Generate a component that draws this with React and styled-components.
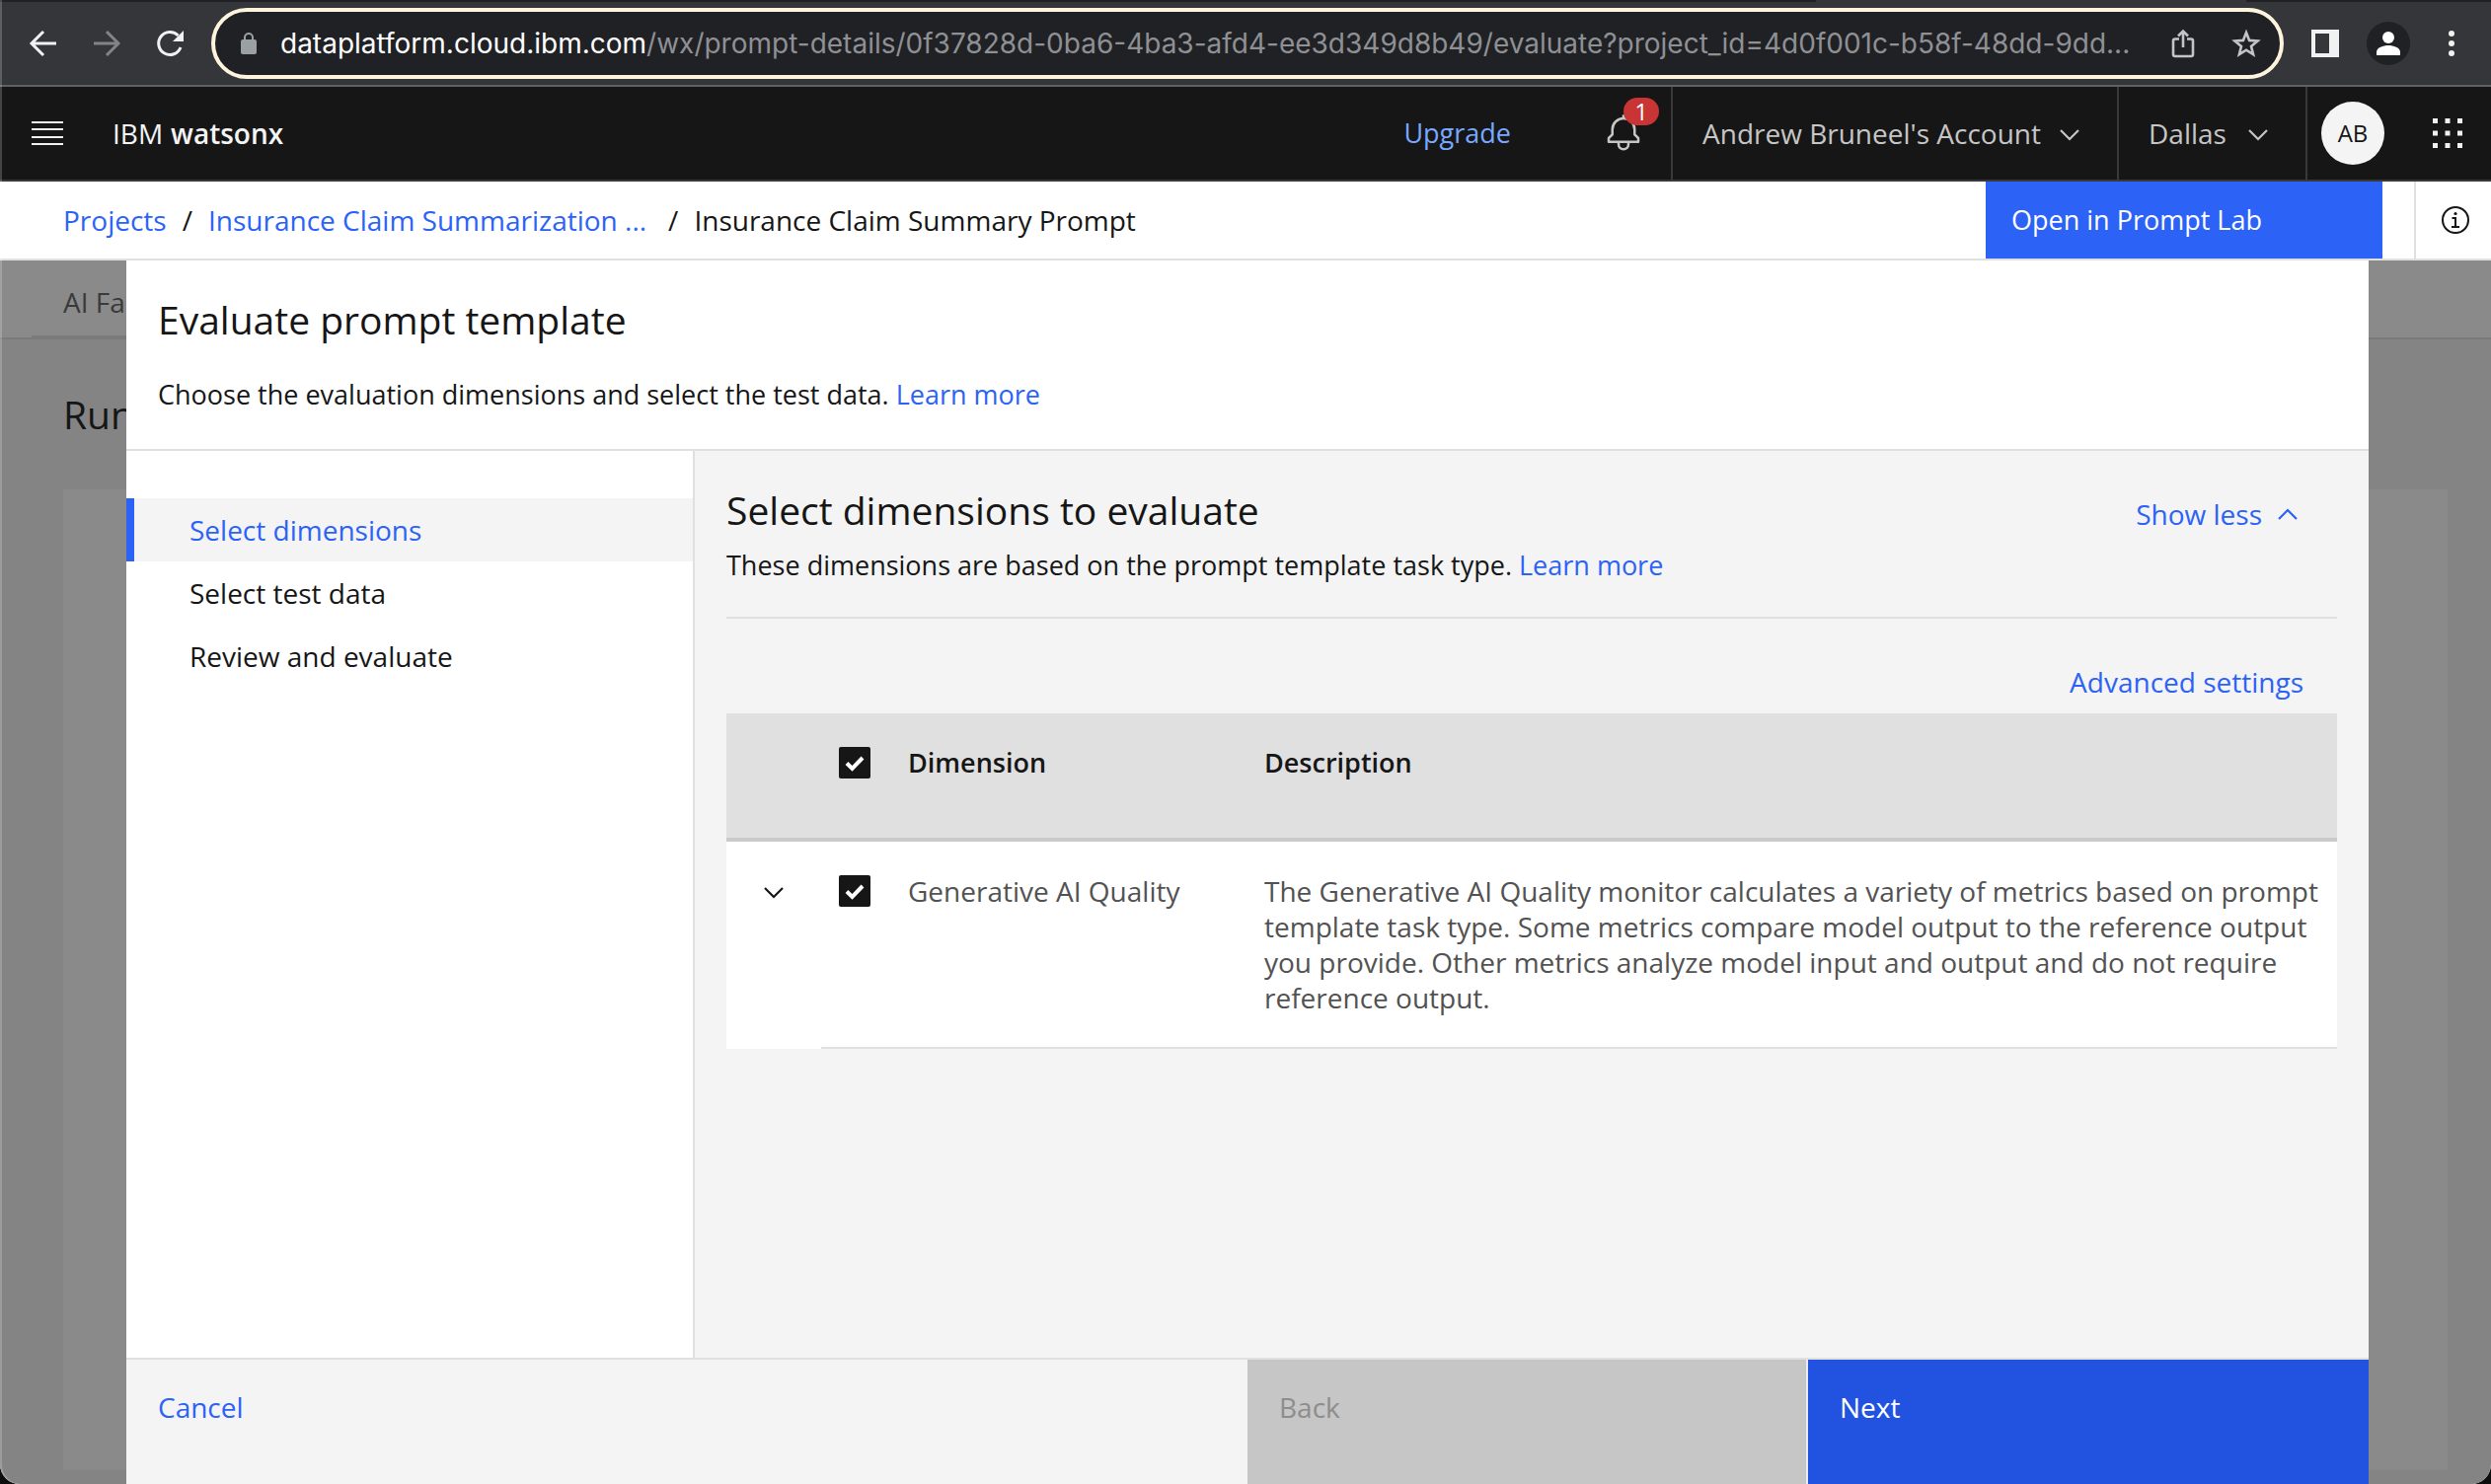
import React from "react";
import styled, { createGlobalStyle } from "styled-components";

const Global = createGlobalStyle`
  *, *::before, *::after { box-sizing: border-box; }
  body { margin: 0; background: #0d0d0d; font-family: "Open Sans", "Noto Sans", sans-serif; font-size: 28px; line-height: 40px; color: #161616; }
  button, input { font: inherit; }
  button { border: 0; padding: 0; background: none; color: inherit; text-align: left; cursor: pointer; }
  a { text-decoration: none; }
  h1, h2, p { margin: 0; font-weight: 400; }
  svg { display: block; flex: none; }
`;

const Window = styled.div`
  position: relative;
  display: flex;
  flex-direction: column;
  min-height: 100vh;
  overflow: hidden;
  border-radius: 0 0 20px 20px;
  background: #fff;
  &::after {
    content: "";
    position: absolute;
    inset: 0;
    border-radius: 0 0 20px 20px;
    box-shadow: inset 2px 0 rgba(255, 255, 255, 0.2);
    pointer-events: none;
  }
`;

const TabStrip = styled.div`
  display: flex;
  justify-content: flex-end;
  height: 2px;
  padding-right: 248px;
  background: #202124;
`;

const ActiveTab = styled.div`
  width: 436px;
  background: #35363a;
`;

const BrowserBar = styled.div`
  display: flex;
  align-items: center;
  height: 86px;
  padding: 0 26px 0 28px;
  background: #35363a;
  border-bottom: 2px solid #5f6064;
`;

const BrowserNav = styled.div`
  display: flex;
  gap: 32px;
  margin-right: 26px;
`;

const IconButton = styled.button`
  display: flex;
  align-items: center;
  justify-content: center;
  color: ${(p) => p.$color || "#f1f1f1"};
`;

const AddressBar = styled.form`
  flex: 1;
  display: flex;
  align-items: center;
  gap: 32px;
  height: 72px;
  padding: 0 18px 0 24px;
  border: 4px solid #fef3dc;
  border-radius: 36px;
  background: #202124;
`;

const Address = styled.div`
  flex: 1;
  display: flex;
  align-items: center;
  margin-left: -10px;
  font-family: Inter, Roboto, sans-serif;
`;

const Host = styled.label`
  color: #fff;
`;

const Path = styled.input`
  flex: 1;
  min-width: 0;
  padding: 0;
  border: 0;
  outline: 0;
  background: none;
  color: #8f9094;
`;

const BrowserTools = styled.div`
  display: flex;
  align-items: center;
  gap: 28px;
  margin-left: 28px;
`;

const Header = styled.header`
  display: flex;
  align-items: stretch;
  height: 96px;
  background: #161616;
  border-bottom: 2px solid #393939;
  color: #c6c6c6;
`;

const MenuButton = styled(IconButton)`
  width: 96px;
`;

const Brand = styled.a`
  display: flex;
  align-items: center;
  gap: 8px;
  padding-left: 18px;
  color: #f4f4f4;
  strong { font-weight: 600; }
`;

const HeaderRight = styled.div`
  display: flex;
  margin-left: auto;
`;

const UpgradeLink = styled.a`
  display: flex;
  align-items: center;
  padding-right: 64px;
  color: #78a9ff;
  font-size: 27px;
`;

const BellButton = styled(IconButton)`
  position: relative;
  width: 98px;
  padding-left: 2px;
`;

const Badge = styled.span`
  position: absolute;
  top: 11px;
  right: 12px;
  width: 36px;
  height: 28px;
  border-radius: 14px;
  background: #c93434;
  color: #fff;
  font-size: 24px;
  line-height: 28px;
  text-align: center;
`;

const HeaderMenu = styled.button`
  display: flex;
  align-items: center;
  justify-content: space-between;
  width: ${(p) => p.$width};
  padding: 0 38px 0 30px;
  border-left: 2px solid #393939;
  svg { margin-top: 4px; }
`;

const AvatarButton = styled.button`
  display: flex;
  align-items: center;
  padding: 0 14px;
  border-left: 2px solid #393939;
  span {
    width: 64px;
    height: 64px;
    border-radius: 50%;
    background: #f4f4f4;
    color: #161616;
    font-size: 24px;
    line-height: 64px;
    text-align: center;
  }
`;

const SwitcherButton = styled(IconButton)`
  width: 94px;
  padding-left: 6px;
`;

const SubBar = styled.div`
  display: flex;
  height: 80px;
  border-bottom: 2px solid #e0e0e0;
`;

const Crumbs = styled.nav`
  flex: 1;
  display: flex;
  align-items: center;
  gap: 16px;
  padding-left: 64px;
`;

const Link = styled.a`
  color: #2c62f6;
`;

const TruncatedLink = styled(Link)`
  padding-right: 6px;
`;

const OpenButton = styled.button`
  width: 402px;
  padding-left: 26px;
  background: #2c62f6;
  color: #fff;
  font-size: 27px;
`;

const InfoButton = styled(IconButton)`
  width: 78px;
  margin-left: 32px;
  padding-left: 4px;
  border-left: 2px solid #e0e0e0;
`;

const Stage = styled.div`
  flex: 1;
  display: grid;
  > * { grid-area: 1 / 1; }
`;

const Dimmed = styled.div`
  display: flex;
  flex-direction: column;
  min-width: 0;
  background: #848484;
`;

const DimTabs = styled.div`
  display: flex;
  height: 80px;
  padding-left: 32px;
  background: #8a8a8a;
  border-bottom: 2px solid #7b7b7b;
`;

const DimTab = styled.div`
  padding: 22px 32px 0;
  border-bottom: 2px solid #7b7b7b;
  color: #3a3a3a;
`;

const DimTitle = styled.div`
  padding: 52px 64px;
  font-size: 39px;
  line-height: 48px;
`;

const DimCard = styled.div`
  flex: 1;
  margin: 0 44px 14px 64px;
  background: #8a8a8a;
`;

const Modal = styled.section`
  display: flex;
  flex-direction: column;
  margin: 0 124px 0 128px;
  background: #fff;
  min-width: 0;
`;

const Text = styled.p`
  font-size: 27px;
`;

const ModalHeader = styled.div`
  height: 193px;
  padding: 36px 32px 0;
  border-bottom: 2px solid #e0e0e0;
`;

const Title = styled.h1`
  margin-bottom: 32px;
  font-size: 39px;
  line-height: 48px;
`;

const ModalBody = styled.div`
  flex: 1;
  display: flex;
`;

const Steps = styled.nav`
  width: 576px;
  padding-top: 48px;
  border-right: 2px solid #e0e0e0;
`;

const Step = styled.button`
  display: block;
  width: 100%;
  height: 64px;
  padding-left: 56px;
  border-left: 8px solid ${(p) => (p.$active ? "#2c62f6" : "transparent")};
  background: ${(p) => (p.$active ? "#f4f4f4" : "transparent")};
  color: ${(p) => (p.$active ? "#2c62f6" : "#161616")};
`;

const Content = styled.div`
  flex: 1;
  min-width: 0;
  padding: 36px 32px;
  background: #f4f4f4;
`;

const ContentHead = styled.div`
  display: flex;
  justify-content: space-between;
  align-items: flex-start;
  padding-bottom: 32px;
  border-bottom: 2px solid #e0e0e0;
`;

const Heading = styled.h2`
  margin-bottom: 12px;
  font-size: 39px;
  line-height: 48px;
`;

const TextButton = styled.button`
  display: flex;
  align-items: center;
  gap: 16px;
  color: #2c62f6;
`;

const ShowLess = styled(TextButton)`
  padding: 8px 40px 0 0;
`;

const Toolbar = styled.div`
  display: flex;
  justify-content: flex-end;
  padding: 44px 34px 12px 0;
`;

const Table = styled.table`
  width: 100%;
  border-collapse: collapse;
  table-layout: fixed;
  background: #fff;
  line-height: 36px;
`;

const Col = styled.col`
  width: ${(p) => p.$width};
`;

const Th = styled.th`
  height: 128px;
  padding: 32px 0 0;
  border-bottom: 4px solid #cacaca;
  background: #e0e0e0;
  font-size: 27px;
  font-weight: 600;
  text-align: left;
  vertical-align: top;
`;

const Td = styled.td`
  padding: 32px 12px 32px 0;
  border-bottom: ${(p) => (p.$plain ? "0" : "2px solid #e0e0e0")};
  color: #525252;
  vertical-align: top;
`;

const ExpandButton = styled(IconButton)`
  width: 96px;
  height: 40px;
`;

const Check = styled.input`
  appearance: none;
  display: block;
  width: 32px;
  height: 32px;
  margin: 2px 0 0 18px;
  border-radius: 2px;
  background: #161616;
  &:checked {
    background: #161616 url("data:image/svg+xml,%3Csvg xmlns='http://www.w3.org/2000/svg' viewBox='0 0 32 32'%3E%3Cpath d='M8 16.500l5.500 5.500 10.500-11' fill='none' stroke='white' stroke-width='4'/%3E%3C/svg%3E") center / 32px 32px;
  }
`;

const Footer = styled.footer`
  display: grid;
  grid-template-columns: 2fr 1fr 1fr;
  height: 128px;
  border-top: 2px solid #e0e0e0;
  background: #f4f4f4;
`;

const FooterButton = styled.button`
  display: flex;
  padding: 28px 32px;
  background: ${(p) => p.$bg || "transparent"};
  color: ${(p) => p.$color};
  border-right: ${(p) => (p.$divided ? "2px solid #e8ecf8" : "0")};
`;

const Chevron = ({ up }) => (
  <svg width="20" height="12" viewBox="0 0 20 12" fill="none" stroke="currentColor" strokeWidth="2.2">
    <path d={up ? "M1 11l9-9 9 9" : "M1 1l9 9 9-9"} />
  </svg>
);

export default function App() {
  return (
    <>
      <Global />
      <Window>
        <TabStrip><ActiveTab /></TabStrip>
        <BrowserBar>
          <BrowserNav>
            <IconButton aria-label="Back">
              <svg width="32" height="32" viewBox="0 0 32 32" fill="none" stroke="currentColor" strokeWidth="3"><path d="M29 16H5M16 4L4 16l12 12" /></svg>
            </IconButton>
            <IconButton aria-label="Forward" $color="#828387">
              <svg width="32" height="32" viewBox="0 0 32 32" fill="none" stroke="currentColor" strokeWidth="3"><path d="M3 16h24M16 4l12 12-12 12" /></svg>
            </IconButton>
            <IconButton aria-label="Reload">
              <svg width="32" height="32" viewBox="0 0 32 32" fill="none" stroke="currentColor" strokeWidth="3"><path d="M27 20a11.500 11.500 0 1 1-2.500-12" /><path d="M30 3v11H19z" fill="currentColor" stroke="none" /></svg>
            </IconButton>
          </BrowserNav>
          <AddressBar onSubmit={(e) => e.preventDefault()}>
            <svg width="20" height="24" viewBox="0 0 20 24"><rect x="2" y="8" width="16" height="15" rx="2" fill="#9aa0a4" /><path d="M6 9V6a4 4 0 0 1 8 0v3" fill="none" stroke="#9aa0a4" strokeWidth="2" /></svg>
            <Address>
              <Host htmlFor="address">dataplatform.cloud.ibm.com</Host>
              <Path id="address" readOnly value="/wx/prompt-details/0f37828d-0ba6-4ba3-afd4-ee3d349d8b49/evaluate?project_id=4d0f001c-b58f-48dd-9dd..." />
            </Address>
            <IconButton type="button" aria-label="Share" $color="#c4c4c6">
              <svg width="32" height="32" viewBox="0 0 32 32" fill="none" stroke="currentColor" strokeWidth="2.600"><path d="M12 11.500H8a2 2 0 0 0-2 2V27a2 2 0 0 0 2 2h16a2 2 0 0 0 2-2V13.500a2 2 0 0 0-2-2h-4M16 20V4M11 8.500l5-5 5 5" /></svg>
            </IconButton>
            <IconButton type="button" aria-label="Bookmark" $color="#c4c4c6">
              <svg width="32" height="32" viewBox="0 0 32 32" fill="none" stroke="currentColor" strokeWidth="2.600"><path d="M16 5l3.100 7.900 8.400.6-6.500 5.400 2.100 8.300L16 22.700l-7.100 4.500 2.100-8.300-6.500-5.400 8.400-.6z" /></svg>
            </IconButton>
          </AddressBar>
          <BrowserTools>
            <IconButton aria-label="Side panel">
              <svg width="28" height="28" viewBox="0 0 28 28"><path fillRule="evenodd" fill="currentColor" d="M0 0h28v28H0zM4 4v20h14V4z" /></svg>
            </IconButton>
            <IconButton aria-label="Profile">
              <svg width="44" height="44" viewBox="0 0 44 44"><circle cx="22" cy="22" r="22" fill="#202124" /><circle cx="22" cy="16" r="6" fill="#fff" /><path d="M10 34v-3c0-5 7-7 12-7s12 2 12 7v3z" fill="#fff" /></svg>
            </IconButton>
            <IconButton aria-label="More">
              <svg width="28" height="28" viewBox="0 0 28 28" fill="currentColor"><circle cx="14" cy="4" r="3" /><circle cx="14" cy="14" r="3" /><circle cx="14" cy="24" r="3" /></svg>
            </IconButton>
          </BrowserTools>
        </BrowserBar>

        <Header>
          <MenuButton aria-label="Menu">
            <svg width="32" height="24" viewBox="0 0 32 24" stroke="currentColor" strokeWidth="2"><path d="M0 1h32M0 8h32M0 16h32M0 23h32" /></svg>
          </MenuButton>
          <Brand href="#">IBM <strong>watsonx</strong></Brand>
          <HeaderRight>
            <UpgradeLink href="#">Upgrade</UpgradeLink>
            <BellButton aria-label="Notifications" $color="#c6c6c6">
              <svg width="40" height="40" viewBox="0 0 32 32" fill="currentColor"><path d="M28.707 19.293L26 16.586V13a10.014 10.014 0 0 0-9-9.950V1h-2v2.050A10.014 10.014 0 0 0 6 13v3.586l-2.707 2.707A1 1 0 0 0 3 20v3a1 1 0 0 0 1 1h7v1a5 5 0 0 0 10 0v-1h7a1 1 0 0 0 1-1v-3a1 1 0 0 0-.293-.707zM19 25a3 3 0 0 1-6 0v-1h6zm8-3H5v-1.586l2.707-2.707A1 1 0 0 0 8 17v-4a8 8 0 0 1 16 0v4a1 1 0 0 0 .293.707L27 20.414z" /></svg>
              <Badge>1</Badge>
            </BellButton>
            <HeaderMenu $width="452px">Andrew Bruneel's Account <Chevron /></HeaderMenu>
            <HeaderMenu $width="191px">Dallas <Chevron /></HeaderMenu>
            <AvatarButton aria-label="AB profile"><span>AB</span></AvatarButton>
            <SwitcherButton aria-label="App switcher">
              <svg width="30" height="30" viewBox="0 0 30 30" fill="currentColor"><path d="M0 0h5v5H0zM12.500 0h5v5h-5zM25 0h5v5h-5zM0 12.500h5v5H0zM12.500 12.500h5v5h-5zM25 12.500h5v5h-5zM0 25h5v5H0zM12.500 25h5v5h-5zM25 25h5v5h-5z" /></svg>
            </SwitcherButton>
          </HeaderRight>
        </Header>

        <SubBar>
          <Crumbs aria-label="Breadcrumb">
            <Link href="#">Projects</Link>
            <span>/</span>
            <TruncatedLink href="#">Insurance Claim Summarization ...</TruncatedLink>
            <span>/</span>
            <span>Insurance Claim Summary Prompt</span>
          </Crumbs>
          <OpenButton>Open in Prompt Lab</OpenButton>
          <InfoButton aria-label="Information" $color="#161616">
            <svg width="28" height="28" viewBox="0 0 28 28" fill="none" stroke="currentColor" strokeWidth="2"><circle cx="14" cy="14" r="13" /><path d="M10.500 12H14v9M10 21h8" /><circle cx="14" cy="7.500" r="1.600" fill="currentColor" stroke="none" /></svg>
          </InfoButton>
        </SubBar>

        <Stage>
          <Dimmed aria-hidden="true">
            <DimTabs><DimTab>AI Fa</DimTab></DimTabs>
            <DimTitle>Run</DimTitle>
            <DimCard />
          </Dimmed>
          <Modal role="dialog" aria-labelledby="dialog-title">
            <ModalHeader>
              <Title id="dialog-title">Evaluate prompt template</Title>
              <Text>Choose the evaluation dimensions and select the test data. <Link href="#">Learn more</Link></Text>
            </ModalHeader>
            <ModalBody>
              <Steps>
                <Step $active>Select dimensions</Step>
                <Step>Select test data</Step>
                <Step>Review and evaluate</Step>
              </Steps>
              <Content>
                <ContentHead>
                  <div>
                    <Heading>Select dimensions to evaluate</Heading>
                    <Text>These dimensions are based on the prompt template task type. <Link href="#">Learn more</Link></Text>
                  </div>
                  <ShowLess>Show less <Chevron up /></ShowLess>
                </ContentHead>
                <Toolbar><TextButton>Advanced settings</TextButton></Toolbar>
                <Table>
                  <colgroup>
                    <Col $width="96px" /><Col $width="88px" /><Col $width="361px" /><Col />
                  </colgroup>
                  <thead>
                    <tr>
                      <Th />
                      <Th><Check type="checkbox" defaultChecked aria-label="Select all dimensions" /></Th>
                      <Th>Dimension</Th>
                      <Th>Description</Th>
                    </tr>
                  </thead>
                  <tbody>
                    <tr>
                      <Td $plain><ExpandButton aria-label="Expand row" $color="#161616"><Chevron /></ExpandButton></Td>
                      <Td><Check id="quality" type="checkbox" defaultChecked /></Td>
                      <Td><label htmlFor="quality">Generative AI Quality</label></Td>
                      <Td>The Generative AI Quality monitor calculates a variety of metrics based on prompt template task type. Some metrics compare model output to the reference output you provide. Other metrics analyze model input and output and do not require reference output.</Td>
                    </tr>
                  </tbody>
                </Table>
              </Content>
            </ModalBody>
            <Footer>
              <FooterButton $color="#2c62f6">Cancel</FooterButton>
              <FooterButton $bg="#c6c6c6" $color="#8d8d8d" $divided disabled>Back</FooterButton>
              <FooterButton $bg="#2153e0" $color="#fff">Next</FooterButton>
            </Footer>
          </Modal>
        </Stage>
      </Window>
    </>
  );
}
